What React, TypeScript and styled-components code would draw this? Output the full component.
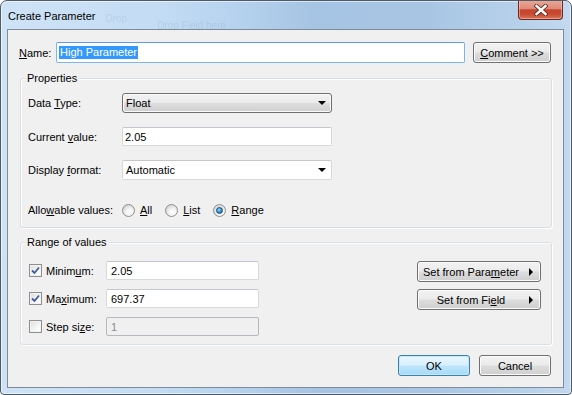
import React from 'react';
import styled, { createGlobalStyle, css } from 'styled-components';

const GlobalStyle = createGlobalStyle`
  html, body {
    margin: 0;
    padding: 0;
    background: #ffffff;
  }
  body {
    font-family: "Liberation Sans", Arial, sans-serif;
    font-size: 11px;
    color: #000;
  }
`;

const Window = styled.div`
  width: 572px;
  height: 395px;
  box-sizing: border-box;
  border: 1px solid #4f5b68;
  border-radius: 7px 7px 4px 4px;
  background: linear-gradient(
    to right,
    #cfe3f7 0%,
    #c3dcf4 28%,
    #b7d3ef 40%,
    #a6c4e3 55%,
    #a8c6e4 75%,
    #b6d0ea 90%,
    #c3d9ef 100%
  );
  box-shadow: inset 0 0 0 1px rgba(255, 255, 255, 0.55);
  display: flex;
  flex-direction: column;
  overflow: hidden;
`;

const TitleBar = styled.div`
  height: 28px;
  flex: 0 0 28px;
  display: flex;
  align-items: flex-start;
`;

const TitleText = styled.div`
  margin: 8px 0 0 7px;
  font-size: 11px;
  line-height: 14px;
  color: #000;
`;

const GhostText = styled.div<{ $top: number; $left: number }>`
  margin: ${(p) => p.$top}px 0 0 ${(p) => p.$left}px;
  font-size: 10px;
  line-height: 12px;
  color: rgba(60, 90, 130, 0.1);
  filter: blur(0.7px);
  white-space: nowrap;
`;

const CloseButton = styled.div`
  margin: -1px 8px 0 auto;
  width: 45px;
  height: 20px;
  box-sizing: border-box;
  border: 1px solid #6a2a20;
  border-top: none;
  border-radius: 0 0 4px 4px;
  background: linear-gradient(
    to bottom,
    #eaa99a 0%,
    #df8b78 45%,
    #c8432c 52%,
    #c84a31 75%,
    #da7659 100%
  );
  box-shadow: inset 0 0 0 1px rgba(255, 220, 210, 0.45);
  display: flex;
  align-items: center;
  justify-content: center;
`;

const Client = styled.div`
  margin: 0 7px 0 6px;
  height: 359px;
  box-sizing: border-box;
  border: 1px solid #7f8b98;
  background: #f0f0f0;
  padding: 12px 12px 0 12px;
  display: flex;
  flex-direction: column;
`;

const NameRow = styled.div`
  display: flex;
  align-items: center;
  height: 21px;
`;

const NameLabel = styled.div`
  width: 37px;
  margin-left: -1px;
`;

const U = styled.span`
  text-decoration: underline;
  text-underline-offset: 1px;
`;

const TextBox = styled.div<{ $width?: number; $height: number; $focused?: boolean; $disabled?: boolean; $pad?: number }>`
  box-sizing: border-box;
  height: ${(p) => p.$height}px;
  ${(p) => (p.$width ? `width: ${p.$width}px; flex: 0 0 ${p.$width}px;` : 'flex: 1;')}
  border: 1px solid #d6dadf;
  border-top-color: #c3c7cc;
  border-radius: 2px;
  background: #fff;
  padding-left: ${(p) => p.$pad ?? 2}px;
  display: flex;
  align-items: center;
  white-space: nowrap;
  ${(p) =>
    p.$focused &&
    css`
      border-color: #7eb4ea;
      border-top-color: #5a9fdf;
    `}
  ${(p) =>
    p.$disabled &&
    css`
      background: #f0f0f0;
      border-color: #b5b9bd;
      color: #8a8a8a;
    `}
`;

const Selected = styled.span`
  background: #3399ff;
  color: #fff;
  line-height: 13px;
  padding: 0 1px;
`;

const buttonLook = css`
  box-sizing: border-box;
  border: 1px solid #707070;
  border-radius: 3px;
  background: linear-gradient(to bottom, #f2f2f2 0%, #ebebeb 48%, #dddddd 52%, #cfcfcf 100%);
  box-shadow: inset 0 0 0 1px #fbfbfb;
`;

const Button = styled.div<{ $width: number; $default?: boolean }>`
  ${buttonLook}
  width: ${(p) => p.$width}px;
  flex: 0 0 ${(p) => p.$width}px;
  height: 21px;
  display: flex;
  align-items: center;
  justify-content: center;
  ${(p) =>
    p.$default &&
    css`
      border-color: #3c7fb1;
      background: linear-gradient(to bottom, #eaf6fd 0%, #d9f0fc 48%, #bee6fd 52%, #a7d9f5 100%);
      box-shadow: inset 0 0 0 1px #c3eafc;
    `}
`;

const CommentButton = styled(Button)`
  margin-left: 8px;
`;

const GroupBox = styled.div<{ $top: number; $padRight: number; $padBottom: number }>`
  margin-top: ${(p) => p.$top}px;
  margin-right: -1px;
  border: 1px solid #d5dfe5;
  border-radius: 3px;
  padding: 0 ${(p) => p.$padRight}px ${(p) => p.$padBottom}px 7px;
  box-shadow: inset 1px 1px 0 #ffffff, 1px 1px 0 #ffffff;
`;

const GroupTitle = styled.div`
  width: fit-content;
  margin: -8px 0 0 -3px;
  padding: 0 2px;
  line-height: 14px;
  background: #f0f0f0;
`;

const FormRow = styled.div<{ $top: number; $height: number }>`
  display: flex;
  align-items: center;
  margin-top: ${(p) => p.$top}px;
  height: ${(p) => p.$height}px;
`;

const FieldLabel = styled.div`
  width: 94px;
  flex: 0 0 94px;
`;

const Combo = styled.div<{ $plain?: boolean }>`
  ${buttonLook}
  width: 210px;
  height: 20px;
  display: flex;
  align-items: center;
  padding: 0 5px 0 3px;
  ${(p) =>
    p.$plain &&
    css`
      background: #fff;
      border-color: #d6dadf;
      border-top-color: #c3c7cc;
      border-radius: 2px;
      box-shadow: none;
    `}
`;

const ComboText = styled.div`
  flex: 1;
`;

const DownArrow = styled.div`
  width: 0;
  height: 0;
  border-left: 4px solid transparent;
  border-right: 4px solid transparent;
  border-top: 4px solid #000;
`;

const RightArrow = styled.div`
  width: 0;
  height: 0;
  border-top: 4px solid transparent;
  border-bottom: 4px solid transparent;
  border-left: 4px solid #000;
`;

const RadioGroup = styled.div`
  display: flex;
  align-items: center;
  gap: 13px;
`;

const RadioItem = styled.div`
  display: flex;
  align-items: center;
`;

const RadioCircle = styled.div<{ $checked?: boolean }>`
  box-sizing: border-box;
  width: 13px;
  height: 13px;
  margin-right: 5px;
  border-radius: 50%;
  border: 1px solid #8f8f8f;
  background: radial-gradient(circle at 60% 65%, #ffffff 0%, #f4f4f4 35%, #d6d6d6 75%, #c8c8c8 100%);
  display: flex;
  align-items: center;
  justify-content: center;
  ${(p) =>
    p.$checked &&
    css`
      &::after {
        content: '';
        width: 5px;
        height: 5px;
        border-radius: 50%;
        border: 1px solid #1b4a73;
        background: radial-gradient(circle at 40% 35%, #9fdcfb 0%, #3b9bd6 45%, #175d92 100%);
      }
    `}
`;

const RangeBody = styled.div`
  display: flex;
  margin-top: 12px;
`;

const RangeRows = styled.div`
  display: flex;
  flex-direction: column;
  gap: 9px;
  padding-left: 1px;
`;

const RangeRow = styled.div`
  display: flex;
  align-items: center;
  height: 19px;
`;

const CheckBox = styled.div`
  box-sizing: border-box;
  width: 13px;
  height: 13px;
  margin-right: 4px;
  border: 1px solid #8f8f8f;
  background: linear-gradient(135deg, #dcdcdc 0%, #f6f6f6 60%, #ffffff 100%);
  box-shadow: inset 0 0 0 1px #f2f2f2;
  display: flex;
  align-items: center;
  justify-content: center;
`;

const CheckLabel = styled.div`
  width: 60px;
  flex: 0 0 60px;
`;

const SideButtons = styled.div`
  margin-left: auto;
  display: flex;
  flex-direction: column;
  gap: 7px;
`;

const SetButton = styled.div`
  ${buttonLook}
  width: 124px;
  height: 21px;
  display: flex;
  align-items: center;
`;

const SetText = styled.div`
  width: 106px;
  text-align: center;
`;

const SetArrow = styled.div`
  flex: 1;
  display: flex;
  justify-content: center;
  padding-right: 2px;
`;

const Footer = styled.div`
  display: flex;
  justify-content: flex-end;
  gap: 9px;
  margin-top: 10px;
`;

const CloseGlyph = () => (
  <svg width="14" height="12" viewBox="0 0 14 12">
    <path
      d="M2.5 2 L11.5 10 M11.5 2 L2.5 10"
      stroke="#5a2a22"
      strokeWidth="4.2"
      strokeLinecap="square"
      fill="none"
    />
    <path
      d="M2.5 2 L11.5 10 M11.5 2 L2.5 10"
      stroke="#ffffff"
      strokeWidth="2.4"
      strokeLinecap="square"
      fill="none"
    />
  </svg>
);

const CheckMark = () => (
  <svg width="9" height="9" viewBox="0 0 9 9">
    <path d="M1 4.5 L3.5 7 L8 1.5" stroke="#3f5c9a" strokeWidth="1.8" fill="none" />
  </svg>
);

const Radio = ({ checked, children }: { checked?: boolean; children: React.ReactNode }) => (
  <RadioItem>
    <RadioCircle $checked={checked} />
    <span>{children}</span>
  </RadioItem>
);

export default function App() {
  return (
    <>
      <GlobalStyle />
      <Window>
        <TitleBar>
          <TitleText>Create Parameter</TitleText>
          <GhostText $top={12} $left={10}>
            Drop
          </GhostText>
          <GhostText $top={19} $left={30}>
            Drop Field here
          </GhostText>
          <CloseButton>
            <CloseGlyph />
          </CloseButton>
        </TitleBar>
        <Client>
          <NameRow>
            <NameLabel>
              <U>N</U>ame:
            </NameLabel>
            <TextBox $height={21} $focused>
              <Selected>High Parameter</Selected>
            </TextBox>
            <CommentButton $width={78}>
              <span>
                <U>C</U>omment &gt;&gt;
              </span>
            </CommentButton>
          </NameRow>

          <GroupBox $top={15} $padRight={8} $padBottom={9}>
            <GroupTitle>Properties</GroupTitle>
            <FormRow $top={8} $height={20}>
              <FieldLabel>
                Data <U>T</U>ype:
              </FieldLabel>
              <Combo>
                <ComboText>Float</ComboText>
                <DownArrow />
              </Combo>
            </FormRow>
            <FormRow $top={14} $height={19}>
              <FieldLabel>
                Current <U>v</U>alue:
              </FieldLabel>
              <TextBox $width={210} $height={19}>
                2.05
              </TextBox>
            </FormRow>
            <FormRow $top={14} $height={20}>
              <FieldLabel>
                Display <U>f</U>ormat:
              </FieldLabel>
              <Combo $plain>
                <ComboText>Automatic</ComboText>
                <DownArrow />
              </Combo>
            </FormRow>
            <FormRow $top={22} $height={16}>
              <FieldLabel>
                Allo<U>w</U>able values:
              </FieldLabel>
              <RadioGroup>
                <Radio>
                  <U>A</U>ll
                </Radio>
                <Radio>
                  <U>L</U>ist
                </Radio>
                <Radio checked>
                  <U>R</U>ange
                </Radio>
              </RadioGroup>
            </FormRow>
          </GroupBox>

          <GroupBox $top={14} $padRight={10} $padBottom={8}>
            <GroupTitle>Range of values</GroupTitle>
            <RangeBody>
              <RangeRows>
                <RangeRow>
                  <CheckBox>
                    <CheckMark />
                  </CheckBox>
                  <CheckLabel>
                    Minim<U>u</U>m:
                  </CheckLabel>
                  <TextBox $width={153} $height={19} $pad={4}>
                    2.05
                  </TextBox>
                </RangeRow>
                <RangeRow>
                  <CheckBox>
                    <CheckMark />
                  </CheckBox>
                  <CheckLabel>
                    Ma<U>x</U>imum:
                  </CheckLabel>
                  <TextBox $width={153} $height={19} $pad={4}>
                    697.37
                  </TextBox>
                </RangeRow>
                <RangeRow>
                  <CheckBox />
                  <CheckLabel>
                    Step si<U>z</U>e:
                  </CheckLabel>
                  <TextBox $width={153} $height={19} $pad={4} $disabled>
                    1
                  </TextBox>
                </RangeRow>
              </RangeRows>
              <SideButtons>
                <SetButton>
                  <SetText>
                    Set from Para<U>m</U>eter
                  </SetText>
                  <SetArrow>
                    <RightArrow />
                  </SetArrow>
                </SetButton>
                <SetButton>
                  <SetText>
                    Set from Fi<U>e</U>ld
                  </SetText>
                  <SetArrow>
                    <RightArrow />
                  </SetArrow>
                </SetButton>
              </SideButtons>
            </RangeBody>
          </GroupBox>

          <Footer>
            <Button $width={72} $default>
              OK
            </Button>
            <Button $width={72}>Cancel</Button>
          </Footer>
        </Client>
      </Window>
    </>
  );
}
